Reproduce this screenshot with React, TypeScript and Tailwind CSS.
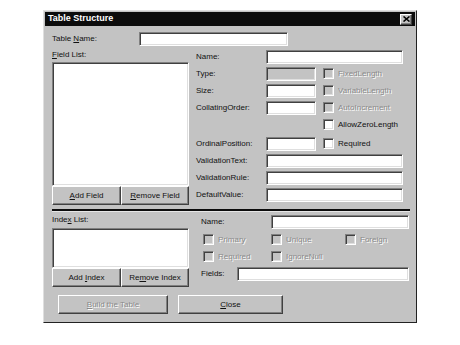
import React from 'react';

const sunken =
  'border border-t-[#808080] border-l-[#808080] border-b-white border-r-white shadow-[inset_1px_1px_0_#404040,inset_-1px_-1px_0_#dfdfdf]';
const raised =
  'border border-t-white border-l-white border-b-[#404040] border-r-[#404040] shadow-[inset_-1px_-1px_0_#808080]';
const dim = 'text-[#8a8a8a] [text-shadow:1px_1px_0_#ffffff]';

function Input({ w, gray = false }: { w: string; gray?: boolean }) {
  return <div className={`${w} h-[14px] ${sunken} ${gray ? 'bg-[#c3c3c3]' : 'bg-white'}`} />;
}

function Check({ label, disabled = false }: { label: string; disabled?: boolean }) {
  return (
    <div className="flex items-center gap-[4px]">
      <div className={`h-[11px] w-[11px] ${sunken} ${disabled ? 'bg-[#c3c3c3]' : 'bg-white'}`} />
      <span className={disabled ? dim : ''}>{label}</span>
    </div>
  );
}

function Button({ children, w, disabled = false }: { children: React.ReactNode; w: string; disabled?: boolean }) {
  return (
    <div className={`${w} h-[19px] flex items-center justify-center bg-[#c3c3c3] ${raised} ${disabled ? dim : ''}`}>
      {children}
    </div>
  );
}

function FieldRow({ label, children, className = '' }: { label: string; children: React.ReactNode; className?: string }) {
  return (
    <div className={`flex h-[17px] items-center ${className}`}>
      <span className="w-[70px]">{label}</span>
      {children}
    </div>
  );
}

export default function App() {
  return (
    <div
      className="h-[345px] w-[460px] bg-white pl-[43px] pt-[10px] text-[8px] text-[#111]"
      style={{ fontFamily: '"Liberation Sans", Arial, sans-serif' }}
    >
      <div className="h-[313px] w-[374px] border border-t-[#dfdfdf] border-l-[#dfdfdf] border-b-[#222] border-r-[#222] bg-[#c3c3c3] p-[1px]">
        {/* title bar */}
        <div className="flex h-[14px] items-center justify-between bg-[#0c0c0c] pl-[3px] pr-[3px]">
          <span className="text-[9px] font-bold text-white">Table Structure</span>
          <div className={`flex h-[11px] w-[12px] items-center justify-center bg-[#c3c3c3] ${raised}`}>
            <svg width="7" height="6" viewBox="0 0 7 6">
              <path d="M0.5 0.5 L6.5 5.5 M6.5 0.5 L0.5 5.5" stroke="#000" strokeWidth="1.6" />
            </svg>
          </div>
        </div>

        <div className="pl-[7px]">
          {/* table name */}
          <div className="mt-[6px] flex h-[14px] items-center">
            <span className="w-[87px]">
              Table <u>N</u>ame:
            </span>
            <Input w="w-[149px]" />
          </div>

          {/* fields section */}
          <div className="mt-[2px] flex gap-[7px]">
            <div className="w-[137px]">
              <div className="flex h-[14px] items-center">
                <span>
                  <u>F</u>ield List:
                </span>
              </div>
              <div className={`h-[124px] bg-white ${sunken}`} />
              <div className="flex">
                <Button w="w-[69px]">
                  <span>
                    <u>A</u>dd Field
                  </span>
                </Button>
                <Button w="w-[68px]">
                  <span>
                    <u>R</u>emove Field
                  </span>
                </Button>
              </div>
            </div>

            <div>
              <FieldRow label="Name:">
                <Input w="w-[137px]" />
              </FieldRow>
              <FieldRow label="Type:">
                <Input w="w-[50px]" gray />
                <div className="ml-[7px]">
                  <Check label="FixedLength" disabled />
                </div>
              </FieldRow>
              <FieldRow label="Size:">
                <Input w="w-[50px]" />
                <div className="ml-[7px]">
                  <Check label="VariableLength" disabled />
                </div>
              </FieldRow>
              <FieldRow label="CollatingOrder:">
                <Input w="w-[50px]" />
                <div className="ml-[7px]">
                  <Check label="AutoIncrement" disabled />
                </div>
              </FieldRow>
              <div className="flex h-[17px] items-center pl-[127px]">
                <Check label="AllowZeroLength" />
              </div>
              <FieldRow label="OrdinalPosition:" className="mt-[2px]">
                <Input w="w-[50px]" />
                <div className="ml-[7px]">
                  <Check label="Required" />
                </div>
              </FieldRow>
              <FieldRow label="ValidationText:">
                <Input w="w-[137px]" />
              </FieldRow>
              <FieldRow label="ValidationRule:">
                <Input w="w-[137px]" />
              </FieldRow>
              <FieldRow label="DefaultValue:">
                <Input w="w-[137px]" />
              </FieldRow>
            </div>
          </div>

          {/* divider */}
          <div className="mt-[4px] h-[2px] w-[358px] bg-[#0c0c0c]" />
          <div className="h-[1px] w-[358px] bg-[#e6e6e6]" />

          {/* index section */}
          <div className="flex gap-[12px]">
            <div className="w-[137px]">
              <div className="flex h-[16px] items-center">
                <span>
                  Inde<u>x</u> List:
                </span>
              </div>
              <div className={`h-[40px] bg-white ${sunken}`} />
              <div className="flex">
                <Button w="w-[69px]">
                  <span>
                    Add <u>I</u>ndex
                  </span>
                </Button>
                <Button w="w-[68px]">
                  <span>
                    Re<u>m</u>ove Index
                  </span>
                </Button>
              </div>
            </div>

            <div>
              <div className="flex h-[19px] items-center">
                <span className="w-[70px]">Name:</span>
                <Input w="w-[138px]" />
              </div>
              <div className="flex h-[17px] items-center pl-[2px]">
                <div className="w-[68px]">
                  <Check label="Primary" disabled />
                </div>
                <div className="w-[74px]">
                  <Check label="Unique" disabled />
                </div>
                <Check label="Foreign" disabled />
              </div>
              <div className="flex h-[17px] items-center pl-[2px]">
                <div className="w-[68px]">
                  <Check label="Required" disabled />
                </div>
                <Check label="IgnoreNull" disabled />
              </div>
              <div className="flex h-[18px] items-center">
                <span className="w-[36px]">Fields:</span>
                <Input w="w-[172px]" />
              </div>
            </div>
          </div>

          {/* bottom buttons */}
          <div className="mt-[8px] flex gap-[10px] pl-[6px]">
            <Button w="w-[110px]" disabled>
              <span>
                <u>B</u>uild the Table
              </span>
            </Button>
            <Button w="w-[105px]">
              <span>
                <u>C</u>lose
              </span>
            </Button>
          </div>
        </div>
      </div>
    </div>
  );
}
